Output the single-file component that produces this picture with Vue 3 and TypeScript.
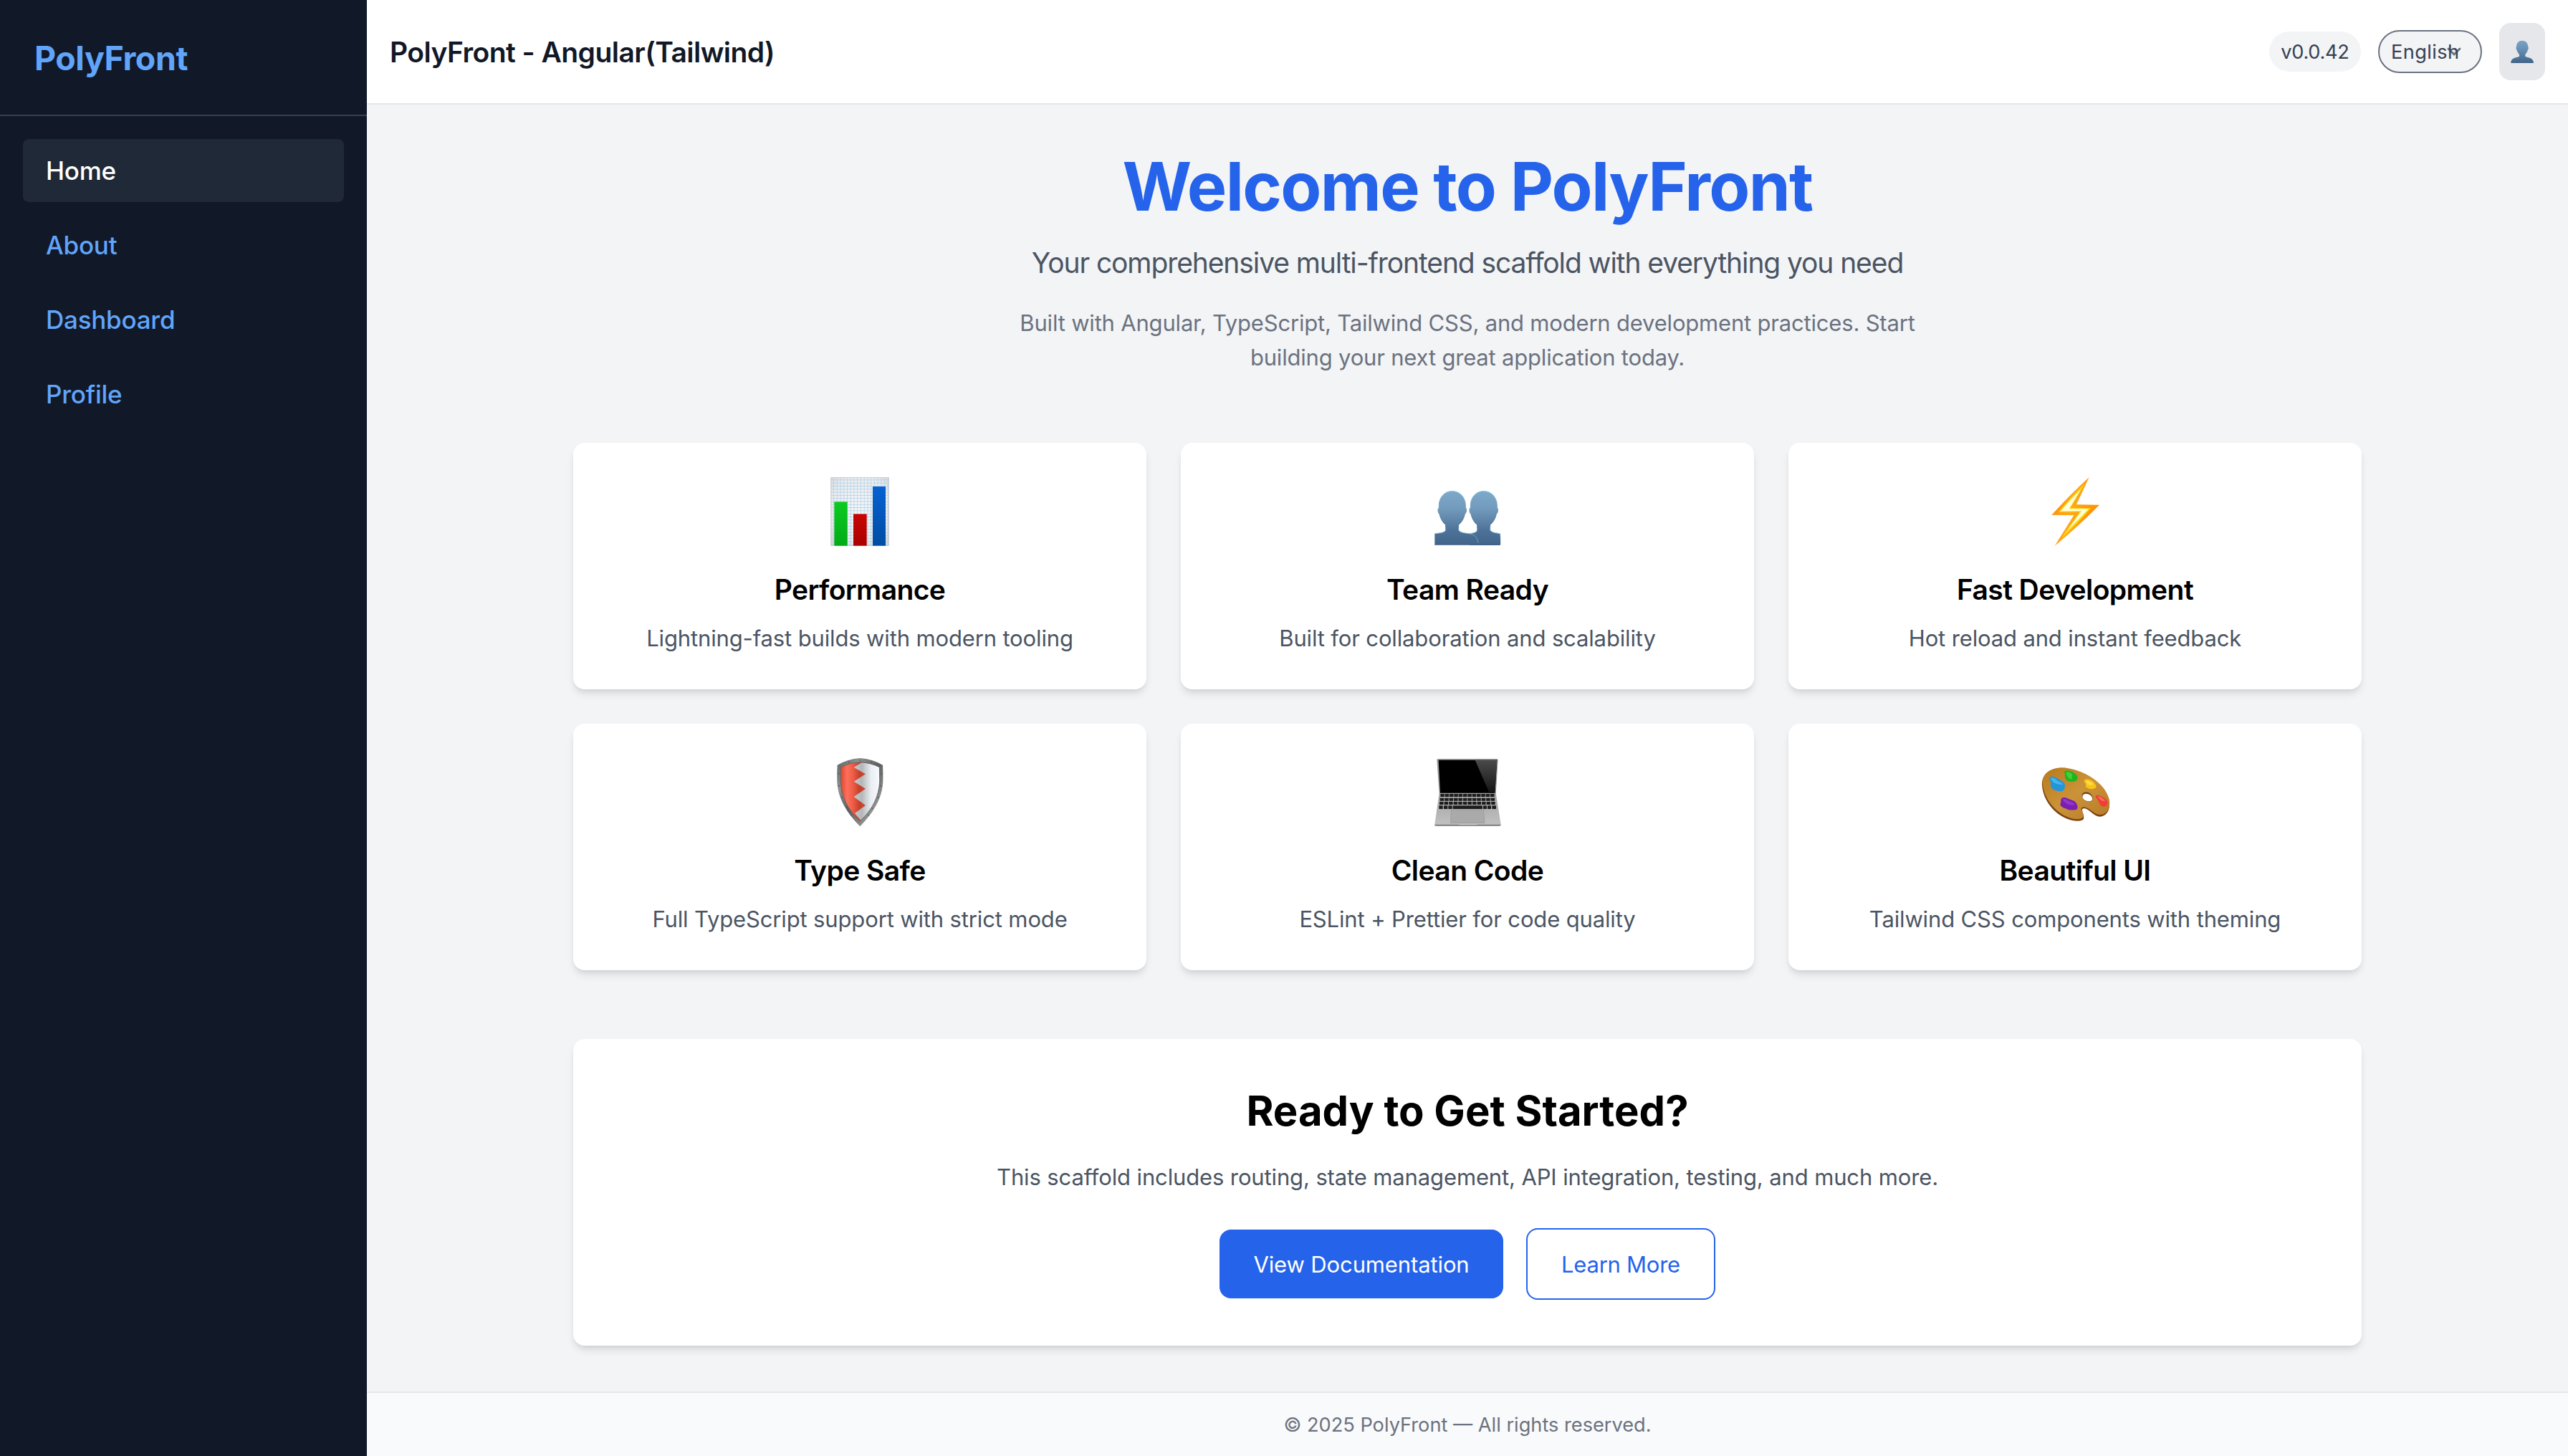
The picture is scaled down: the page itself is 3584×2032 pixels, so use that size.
<script setup lang="ts">
interface NavItem {
  label: string
  active?: boolean
}

interface Feature {
  icon: 'chart' | 'team' | 'bolt' | 'shield' | 'laptop' | 'palette'
  title: string
  text: string
}

const navItems: NavItem[] = [
  { label: 'Home', active: true },
  { label: 'About' },
  { label: 'Dashboard' },
  { label: 'Profile' },
]

const features: Feature[] = [
  { icon: 'chart', title: 'Performance', text: 'Lightning-fast builds with modern tooling' },
  { icon: 'team', title: 'Team Ready', text: 'Built for collaboration and scalability' },
  { icon: 'bolt', title: 'Fast Development', text: 'Hot reload and instant feedback' },
  { icon: 'shield', title: 'Type Safe', text: 'Full TypeScript support with strict mode' },
  { icon: 'laptop', title: 'Clean Code', text: 'ESLint + Prettier for code quality' },
  { icon: 'palette', title: 'Beautiful UI', text: 'Tailwind CSS components with theming' },
]

// Top edge of each row of laptop keys
const keyRows = [234, 251, 267]
</script>

<template>
  <div class="layout">
    <aside class="sidebar">
      <div class="brand">PolyFront</div>
      <nav class="nav">
        <a v-for="item in navItems" :key="item.label" class="nav-link" :class="{ active: item.active }">{{ item.label }}</a>
      </nav>
    </aside>

    <div class="page">
      <header class="topbar">
        <h2 class="topbar-title">PolyFront - Angular(Tailwind)</h2>
        <div class="topbar-actions">
          <span class="version">v0.0.42</span>
          <div class="language">
            <svg class="chevron" viewBox="0 0 20 20" fill="none" stroke="#6b7280" stroke-width="1.5" stroke-linecap="round" stroke-linejoin="round"><path d="M6 8l4 4 4-4" /></svg>
            <span class="language-label">English</span>
          </div>
          <button class="avatar" type="button">
            <svg viewBox="1152 168 96 96">
              <defs>
                <linearGradient id="userFill" x1="0" y1="0" x2="0" y2="1">
                  <stop offset="0" stop-color="#7ba4c6" />
                  <stop offset="0.45" stop-color="#648cb0" />
                  <stop offset="1" stop-color="#416489" />
                </linearGradient>
              </defs>
              <path fill="url(#userFill)" d="M1200 170c-15 0-24 10-24 27-3 1-2 9 1 11 2 9 6 15 11 20v8c-6 6-35 2-35 28h95c0-26-29-22-35-28v-8c5-5 9-11 11-20 3-2 4-10 1-11 0-17-10-27-25-27z" />
            </svg>
          </button>
        </div>
      </header>

      <main class="content">
        <section class="hero">
          <h1 class="hero-title">Welcome to PolyFront</h1>
          <p class="hero-subtitle">Your comprehensive multi-frontend scaffold with everything you need</p>
          <p class="hero-text">Built with Angular, TypeScript, Tailwind CSS, and modern development practices. Start building your next great application today.</p>
        </section>

        <section class="features">
          <article v-for="f in features" :key="f.title" class="card">
            <svg v-if="f.icon === 'chart'" class="card-icon" viewBox="96 78 288 288">
              <defs>
                <pattern id="grid" x="118" y="78" width="14.2" height="12.9" patternUnits="userSpaceOnUse">
                  <path d="M13 0v12.9" stroke="#b5d3ea" stroke-width="2.6" fill="none" />
                  <path d="M0 11.6h14.2" stroke="#b5d3ea" stroke-width="3" fill="none" />
                </pattern>
                <radialGradient id="paper" cx="0.5" cy="0.45" r="0.75">
                  <stop offset="0" stop-color="#f8f8f8" />
                  <stop offset="0.65" stop-color="#ececec" />
                  <stop offset="1" stop-color="#cfcfcf" />
                </radialGradient>
                <linearGradient id="barGreen" x1="0" y1="0" x2="0" y2="1"><stop offset="0" stop-color="#0ccb22" /><stop offset="1" stop-color="#00ab16" /></linearGradient>
                <linearGradient id="barRed" x1="0" y1="0" x2="0" y2="1"><stop offset="0" stop-color="#c80404" /><stop offset="1" stop-color="#ab0000" /></linearGradient>
                <linearGradient id="barBlue" x1="0" y1="0" x2="0" y2="1"><stop offset="0" stop-color="#0562d2" /><stop offset="1" stop-color="#004da3" /></linearGradient>
              </defs>
              <rect x="118" y="78" width="244" height="288" fill="url(#paper)" />
              <rect x="118" y="78" width="244" height="288" fill="url(#grid)" />
              <rect x="119.5" y="79.5" width="241" height="285" fill="none" stroke="#c9cdd2" stroke-width="3" />
              <rect x="133" y="181" width="55" height="184" fill="url(#barGreen)" />
              <rect x="213" y="232" width="56" height="133" fill="url(#barRed)" />
              <rect x="294" y="117" width="54" height="248" fill="url(#barBlue)" />
            </svg>

            <svg v-else-if="f.icon === 'team'" class="card-icon" viewBox="180 78 288 288">
              <defs>
                <linearGradient id="teamFill" gradientUnits="userSpaceOnUse" x1="0" y1="135" x2="0" y2="362">
                  <stop offset="0" stop-color="#7fa9ca" />
                  <stop offset="0.35" stop-color="#7199bb" />
                  <stop offset="0.75" stop-color="#4c7097" />
                  <stop offset="1" stop-color="#42658b" />
                </linearGradient>
                <linearGradient id="teamEdge" gradientUnits="userSpaceOnUse" x1="0" y1="135" x2="0" y2="362">
                  <stop offset="0" stop-color="#8fd0e6" />
                  <stop offset="0.3" stop-color="#6f9cc0" />
                  <stop offset="0.6" stop-color="#3f6188" />
                  <stop offset="0.78" stop-color="#8fd0e6" />
                  <stop offset="0.86" stop-color="#4a7096" />
                  <stop offset="1" stop-color="#2d5078" />
                </linearGradient>
              </defs>
              <path fill="url(#teamFill)" stroke="url(#teamEdge)" stroke-width="3" d="M392 136c-32 0-54 26-55 58v12c-6 2-5 22 2 26 5 22 15 36 26 45v20c0 12-14 14-32 17v46h128v-46c-20-3-42-6-42-17v-20c11-9 21-23 26-45 7-4 9-24 3-26v-12c-1-32-24-58-56-58z" />
              <path fill="url(#teamFill)" d="M260 136c-32 0-54 26-55 58v12c-6 2-5 22 2 26 5 22 15 36 26 45v20c0 12-20 14-46 17v46h182c-2-28-10-42-40-46-20-3-42-6-42-17v-20c11-9 21-23 26-45 7-4 9-24 3-26v-12c-1-32-24-58-56-58z" />
              <path fill="none" stroke="url(#teamEdge)" stroke-width="3" d="M187 314c26-3 46-5 46-17v-20c-11-9-21-23-26-45-7-4-8-24-2-26v-12c1-32 23-58 55-58s55 26 56 58v12c6 2 4 22-3 26-5 22-15 36-26 45v20c0 11 22 14 42 17" />
              <path fill="none" stroke="#79a9c8" stroke-width="2.5" d="M324 313c28 4 42 14 45 40" />
              <path stroke="#2d5078" stroke-width="3" d="M187 360.5h274" />
            </svg>

            <svg v-else-if="f.icon === 'bolt'" class="card-icon" viewBox="84 78 288 288">
              <defs>
                <linearGradient id="boltFill" x1="0" y1="0" x2="1" y2="0.3">
                  <stop offset="0" stop-color="#ff8a00" />
                  <stop offset="0.5" stop-color="#ffa91a" />
                  <stop offset="1" stop-color="#ff8f00" />
                </linearGradient>
              </defs>
              <path fill="url(#boltFill)" d="M287 78Q206 152 130 236L223 237 143 365Q240 285 330 194L234 192z" />
              <path fill="#ffdf1c" d="M268 106Q216 158 159 224L248 223 172 332Q238 272 294 208L208 207z" />
              <path fill="#ffffe0" d="M252 130Q212 170 168 220L256 219 198 298Q240 258 284 211L203 211z" />
            </svg>

            <svg v-else-if="f.icon === 'shield'" class="card-icon" viewBox="96 84 288 288">
              <defs>
                <linearGradient id="rim" x1="0" y1="0" x2="1" y2="1">
                  <stop offset="0" stop-color="#5e6260" /><stop offset="0.25" stop-color="#8e918f" /><stop offset="0.5" stop-color="#5d605f" /><stop offset="0.8" stop-color="#969997" /><stop offset="1" stop-color="#5b5e5d" />
                </linearGradient>
                <linearGradient id="shieldRed" gradientUnits="userSpaceOnUse" x1="160" y1="0" x2="265" y2="0">
                  <stop offset="0" stop-color="#e2452f" /><stop offset="0.25" stop-color="#fb705c" /><stop offset="0.5" stop-color="#ee5b45" /><stop offset="0.75" stop-color="#c2412b" /><stop offset="1" stop-color="#cf4b33" />
                </linearGradient>
                <linearGradient id="shieldSilver" gradientUnits="userSpaceOnUse" x1="215" y1="0" x2="325" y2="0">
                  <stop offset="0" stop-color="#c5c9cc" /><stop offset="0.3" stop-color="#b3b7ba" /><stop offset="0.65" stop-color="#e9eef2" /><stop offset="1" stop-color="#f8fbff" />
                </linearGradient>
              </defs>
              <path fill="url(#rim)" d="M241 84Q292 88 336 113Q338 145 337 180C335 252 296 314 241 370C186 314 147 252 145 180Q144 145 146 113Q190 88 241 84z" />
              <path fill="url(#shieldSilver)" d="M241 101Q286 104 322 122L323 180C320 246 292 300 241 348C190 300 162 246 160 180L160 122Q196 104 241 101z" />
              <path fill="url(#shieldRed)" d="M250 101L215 123 264 151 215 182 264 212 215 246 264 282 219 315 244 345 241 348C190 300 162 246 160 180L160 122Q196 103 250 101z" />
              <path fill="none" stroke="#4a4d4c" stroke-width="2" d="M241 101Q286 104 322 122L323 180C320 246 292 300 241 348C190 300 162 246 160 180L160 122Q196 104 241 101z" />
              <g fill="#4b4e4d"><circle cx="241" cy="93" r="2.5" /><circle cx="195" cy="101" r="2.5" /><circle cx="288" cy="101" r="2.5" /><circle cx="152" cy="150" r="2.5" /><circle cx="330" cy="150" r="2.5" /><circle cx="153" cy="200" r="2.5" /><circle cx="328" cy="200" r="2.5" /><circle cx="165" cy="248" r="2.5" /><circle cx="317" cy="248" r="2.5" /><circle cx="187" cy="290" r="2.5" /><circle cx="292" cy="294" r="2.5" /><circle cx="204" cy="322" r="2.5" /><circle cx="276" cy="322" r="2.5" /></g>
            </svg>

            <svg v-else-if="f.icon === 'laptop'" class="card-icon" viewBox="120 84 288 288">
              <defs>
                <linearGradient id="glare" x1="0" y1="0" x2="0" y2="1"><stop offset="0" stop-color="#4a4a4a" /><stop offset="1" stop-color="#151515" /></linearGradient>
                <linearGradient id="deck" x1="0" y1="0" x2="0" y2="1"><stop offset="0" stop-color="#a2a2a2" /><stop offset="1" stop-color="#c2c2c2" /></linearGradient>
              </defs>
              <path fill="#9a9a9a" d="M140 87H388Q392 87 392 92L383 234H146L136 92Q136 87 140 87z" />
              <path fill="#000" d="M143 92H388L379 230H150z" />
              <path fill="url(#glare)" d="M296 92H388L379 230H356z" />
              <path fill="url(#deck)" d="M146 231H383L404 361Q404 368 398 368H132Q126 368 127 361z" />
              <path fill="#808080" d="M127 362H404Q404 368 398 368H132Q126 368 127 362z" />
              <path fill="#c8c8c8" d="M226 360H308L302 364H232z" />
              <path fill="#aaa" stroke="#8f8f8f" stroke-width="1.5" d="M197 301H332L336 356H193z" />
              <g fill="#1d1d1d">
                <template v-for="(y, r) in keyRows" :key="y">
                  <rect v-for="i in 12" :key="i" :x="151 - r * 2 + (i - 1) * (19 + r * 0.35)" :y="y" :width="16.5" height="12" rx="1.5" />
                </template>
                <rect x="145" y="283" width="16" height="14" rx="1.5" /><rect x="165" y="283" width="16" height="14" rx="1.5" /><rect x="184" y="283" width="16" height="14" rx="1.5" />
                <rect x="203" y="283" width="124" height="14" rx="1.5" />
                <rect x="330" y="283" width="15" height="14" rx="1.5" /><rect x="348" y="283" width="15" height="14" rx="1.5" /><rect x="367" y="283" width="17" height="14" rx="1.5" />
              </g>
            </svg>

            <svg v-else class="card-icon" viewBox="144 84 288 288">
              <defs>
                <linearGradient id="wood" x1="0" y1="0" x2="1" y2="1"><stop offset="0" stop-color="#b9791c" /><stop offset="0.5" stop-color="#cb9338" /><stop offset="1" stop-color="#b67a25" /></linearGradient>
              </defs>
              <path fill="#7c4312" d="M150 200C146 140 200 122 250 128C330 140 410 190 430 262C438 300 420 330 390 329C365 328 350 298 328 295C305 293 330 320 324 338C316 352 280 348 255 338C200 316 156 262 150 200z" />
              <path fill="url(#wood)" d="M152 190C149 138 205 119 252 125C330 137 414 188 431 256C438 292 422 322 392 321C366 320 350 292 326 289C298 290 330 314 322 330C314 344 282 342 257 331C204 308 158 256 152 190z" />
              <path fill="#6e3d10" d="M317 242c0-18 26-20 38-6 13 13 10 30-8 30-17 0-29-11-30-24z" />
              <path fill="#fff" d="M319 246c0-16 24-17 35-5 12 12 8 24-6 24-16 0-28-8-29-19z" />
              <path fill="#1fb51f" d="M244 140c8-8 22-4 32 2 14 6 26 16 22 30-4 12-24 14-38 8-12-4-16-16-14-26 0-6-4-10-2-14z" />
              <path fill="#3fd03a" d="M250 144c8-4 20 0 26 8 2 8-4 12 0 22-14-2-24-14-26-30z" />
              <path fill="#2196d8" d="M180 166c8-8 22-6 32 2 14 8 34 16 34 32 0 8-4 14-10 22-18 2-38-2-48-16-4-8-2-14-2-22-2-6-8-12-6-18z" />
              <path fill="#45b4ec" d="M186 168c10-4 20 2 26 10 10 6 22 8 26 18-16-2-34-4-42-12-4-6-8-10-10-16z" />
              <path fill="#7b1fb0" d="M230 254c6-8 20-6 30 0 14 6 28 8 34 20 4 10 8 20 0 26-16 2-30 4-42-4-12-4-24-8-26-18 4-8 2-16 4-24z" />
              <path fill="#9138c8" d="M236 256c10-4 18 4 28 8 10 4 20 8 24 16-14 2-30 0-40-8-6-4-10-10-12-16z" />
              <path fill="#f7c518" d="M326 178c6-8 20-6 30 0 12 6 22 18 20 28-6 8-24 10-34 4-8-4-12-8-8-16-2-6-10-10-8-16z" />
              <path fill="#ffdc45" d="M334 178c10-2 22 6 30 16-6 4-16 4-22 0-4-4-8-10-8-16z" />
              <path fill="#ee4037" d="M374 242c6-6 18-2 28 4 14 6 26 18 22 32-4 10-20 12-28 4-6-6-8-14-12-22-4-6-12-12-10-18z" />
              <path fill="#fb6a60" d="M384 244c12 2 24 10 30 20-8 2-16-2-22-8-4-4-8-8-8-12z" />
            </svg>

            <h3 class="card-title">{{ f.title }}</h3>
            <p class="card-text">{{ f.text }}</p>
          </article>
        </section>

        <section class="cta">
          <h2 class="cta-title">Ready to Get Started?</h2>
          <p class="cta-text">This scaffold includes routing, state management, API integration, testing, and much more.</p>
          <div class="cta-actions">
            <button class="btn btn-primary" type="button">View Documentation</button>
            <button class="btn btn-outline" type="button">Learn More</button>
          </div>
        </section>
      </main>

      <footer class="footer">© 2025 PolyFront — All rights reserved.</footer>
    </div>
  </div>
</template>

<style>
body {
  margin: 0;
}
</style>

<style scoped>
* {
  box-sizing: border-box;
}

h1,
h2,
h3,
p {
  margin: 0;
}

.layout {
  display: flex;
  height: 2032px;
  overflow: hidden;
  font-family: Inter, 'Liberation Sans', sans-serif;
  background: #f3f4f6;
}

.sidebar {
  width: 512px;
  flex: none;
  background: #111827;
}

.brand {
  height: 162px;
  padding: 49px 48px 47px;
  border-bottom: 2px solid #374151;
  color: #60a5fa;
  font-size: 46.5px;
  font-weight: 700;
  letter-spacing: -0.46px;
  line-height: 64px;
}

.nav {
  display: flex;
  flex-direction: column;
  gap: 16px;
  padding: 32px;
}

.nav-link {
  height: 88px;
  padding: 16px 32px;
  border-radius: 8px;
  color: #60a5fa;
  font-size: 35px;
  font-weight: 500;
  letter-spacing: -0.24px;
  line-height: 56px;
}

.nav-link.active {
  background: #1f2937;
  color: #fff;
}

.page {
  flex: 1;
  display: flex;
  flex-direction: column;
}

.topbar {
  height: 146px;
  display: flex;
  align-items: center;
  justify-content: space-between;
  padding: 0 32px;
  background: #fff;
  border-bottom: 2px solid #e5e7eb;
}

.topbar-title {
  padding-top: 2px;
  color: #111827;
  font-size: 39px;
  font-weight: 600;
  letter-spacing: -0.55px;
  line-height: 56px;
}

.topbar-actions {
  display: flex;
  align-items: center;
  gap: 24px;
}

.version {
  width: 128px;
  height: 56px;
  border-radius: 28px;
  background: #f3f4f6;
  color: #374151;
  font-size: 27.2px;
  letter-spacing: -0.29px;
  line-height: 57px;
  text-align: center;
}

.language {
  position: relative;
  width: 145px;
  height: 60px;
  padding-left: 16px;
  border: 2px solid #6b7280;
  border-radius: 30px;
  background: #f3f4f6;
  color: #374151;
  font-size: 27.2px;
  letter-spacing: 0.4px;
  line-height: 57px;
}

.language-label {
  position: relative;
}

.chevron {
  position: absolute;
  top: 8px;
  right: 17px;
  width: 40px;
  height: 40px;
}

.avatar {
  display: flex;
  align-items: center;
  justify-content: center;
  width: 64px;
  height: 80px;
  padding: 0;
  border: 0;
  border-radius: 16px;
  background: #e5e7eb;
}

.avatar svg {
  width: 32px;
  height: 32px;
}

.content {
  flex: 1;
  width: 2496px;
  margin: 0 auto;
  padding: 64px 0;
}

.hero {
  height: 408px;
  text-align: center;
}

.hero-title {
  padding-top: 2px;
  color: #2563eb;
  font-size: 93.2px;
  font-weight: 700;
  letter-spacing: -1.7px;
  line-height: 96px;
}

.hero-subtitle {
  margin-top: 31px;
  color: #4b5563;
  font-size: 39px;
  letter-spacing: -1.1px;
  line-height: 56px;
}

.hero-text {
  width: 1344px;
  margin: 32px auto 0;
  color: #6b7280;
  font-size: 31px;
  letter-spacing: -0.19px;
  line-height: 48px;
}

.features {
  display: grid;
  grid-template-columns: repeat(3, 800px);
  gap: 48px;
}

.card,
.cta {
  border-radius: 16px;
  background: #fff;
  box-shadow: 0 8px 12px -2px rgb(0 0 0 / 0.1), 0 4px 8px -4px rgb(0 0 0 / 0.1);
  text-align: center;
}

.card {
  height: 344px;
  padding: 48px;
}

.card-icon {
  display: block;
  width: 96px;
  height: 96px;
  margin: 0 auto;
  overflow: visible;
}

.card-title {
  margin-top: 33px;
  color: #000;
  font-size: 39px;
  font-weight: 600;
  letter-spacing: -0.58px;
  line-height: 56px;
}

.card-text {
  margin-top: 16px;
  color: #4b5563;
  font-size: 31px;
  letter-spacing: -0.14px;
  line-height: 48px;
}

.cta {
  height: 428px;
  margin-top: 96px;
  padding: 64px 64px 0;
}

.cta-title {
  color: #000;
  font-size: 58px;
  font-weight: 700;
  letter-spacing: 0;
  line-height: 72px;
}

.cta-text {
  margin-top: 33px;
  color: #4b5563;
  font-size: 31px;
  letter-spacing: -0.13px;
  line-height: 48px;
}

.cta-actions {
  display: flex;
  align-items: center;
  justify-content: center;
  gap: 32px;
  margin-top: 47px;
}

.btn {
  padding: 1px 0 0;
  border-radius: 16px;
  font-family: inherit;
  font-size: 31px;
  letter-spacing: -0.12px;
  line-height: 48px;
}

.btn-primary {
  width: 396px;
  height: 96px;
  border: 0;
  background: #2563eb;
  color: #fff;
}

.btn-outline {
  width: 264px;
  height: 100px;
  border: 2px solid #2563eb;
  background: #fff;
  color: #2563eb;
  letter-spacing: -0.25px;
}

.footer {
  height: 90px;
  padding-top: 25px;
  border-top: 2px solid #e5e7eb;
  background: #f9fafb;
  color: #6b7280;
  font-size: 27.2px;
  line-height: 40px;
  text-align: center;
}
</style>
